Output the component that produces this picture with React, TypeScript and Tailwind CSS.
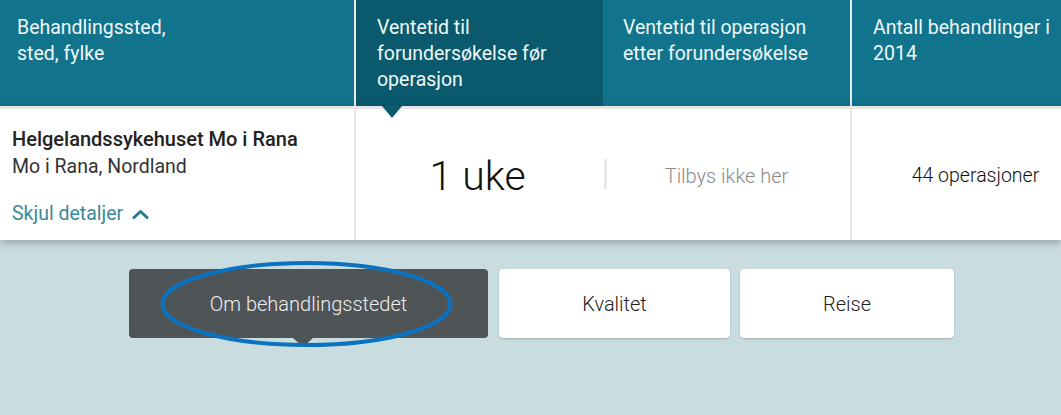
import React from "react";

export default function App() {
  return (
    <div
      className="w-[1061px] h-[415px] bg-[#c9dcdf] overflow-hidden"
      style={{ fontFamily: "Roboto, 'Liberation Sans', sans-serif" }}
    >
      {/* Header */}
      <div className="flex h-[106px] text-[19.5px] leading-[26px] text-[#eef8f9]">
        <div className="w-[354px] bg-[#11738c] pl-[17px] pt-[15px]">
          Behandlingssted,
          <br />
          sted, fylke
        </div>
        <div className="w-[2px] bg-[#e9ecec]" />
        <div className="relative w-[247px] bg-[#0a596d] pl-[21px] pt-[15px]">
          Ventetid til
          <br />
          forundersøkelse før
          <br />
          operasjon
          <div className="absolute left-[26px] top-[106px] z-10 h-0 w-0 border-x-[10px] border-t-[12px] border-x-transparent border-t-[#0a596d]" />
        </div>
        <div className="w-[247px] bg-[#11738c] pl-[20px] pt-[15px]">
          Ventetid til operasjon
          <br />
          etter forundersøkelse
        </div>
        <div className="w-[2px] bg-[#e9ecec]" />
        <div className="flex-1 bg-[#11738c] pl-[21px] pt-[15px]">
          Antall behandlinger i
          <br />
          2014
        </div>
      </div>

      {/* Body row */}
      <div className="relative flex h-[134px] border-t-[3px] border-[#e6e6e6] bg-white shadow-[0_3px_8px_rgba(0,0,0,0.25)]">
        <div className="w-[354px] pl-[12px] pt-[17px]">
          <div className="text-[20px] leading-[26px] font-medium text-[#222]">
            Helgelandssykehuset Mo i Rana
          </div>
          <div className="text-[19.5px] leading-[26px] text-[#333] mt-[2px]">
            Mo i Rana, Nordland
          </div>
          <div className="mt-[21px] flex items-center gap-[9px] text-[19.5px] leading-[26px] text-[#3a8a99]">
            Skjul detaljer
            <svg width="17" height="11" viewBox="0 0 17 11">
              <path
                d="M2 8.5 L8.5 2.5 L15 8.5"
                fill="none"
                stroke="#1f7b8e"
                strokeWidth="3"
                strokeLinecap="round"
                strokeLinejoin="round"
              />
            </svg>
          </div>
        </div>
        <div className="w-[2px] bg-[#e6e6e6]" />
        <div className="flex w-[247px] items-center justify-center pr-[4px] pt-[4px]">
          <span className="text-[41px] font-light text-[#111]">1 uke</span>
        </div>
        <div className="relative flex w-[247px] items-center justify-center pt-[3px]">
          <div className="absolute left-[1px] top-[50px] h-[30px] w-[3px] bg-[#e8e8e8]" />
          <span className="text-[20px] font-light text-[#8a8a8a]">Tilbys ikke her</span>
        </div>
        <div className="w-[2px] bg-[#e6e6e6]" />
        <div className="flex flex-1 items-center justify-center pt-[3px] pl-[38px]">
          <span className="text-[19.5px] font-light text-[#111]">44 operasjoner</span>
        </div>
      </div>

      {/* Buttons */}
      <div className="flex pl-[129px] pt-[29px] text-[20px]">
        <div className="relative flex h-[69px] w-[359px] items-center justify-center rounded-[4px] bg-[#4f5457] font-light text-[#eeeeee]">
          Om behandlingsstedet
          <div className="absolute left-[164px] top-[69px] h-0 w-0 border-x-[10px] border-t-[9px] border-x-transparent border-t-[#4f5457]" />
          <svg
            className="absolute left-[29px] top-[-10px]"
            width="297"
            height="90"
            viewBox="0 0 297 90"
          >
            <ellipse
              cx="148.5"
              cy="45"
              rx="144"
              ry="41"
              fill="none"
              stroke="#0b72c0"
              strokeWidth="4"
            />
          </svg>
        </div>
        <div className="ml-[11px] flex h-[69px] w-[231px] items-center justify-center rounded-[4px] bg-white font-light text-[#222] shadow-[0_1px_2px_rgba(0,0,0,0.2)]">
          Kvalitet
        </div>
        <div className="ml-[10px] flex h-[69px] w-[214px] items-center justify-center rounded-[4px] bg-white font-light text-[#222] shadow-[0_1px_2px_rgba(0,0,0,0.2)]">
          Reise
        </div>
      </div>
    </div>
  );
}
